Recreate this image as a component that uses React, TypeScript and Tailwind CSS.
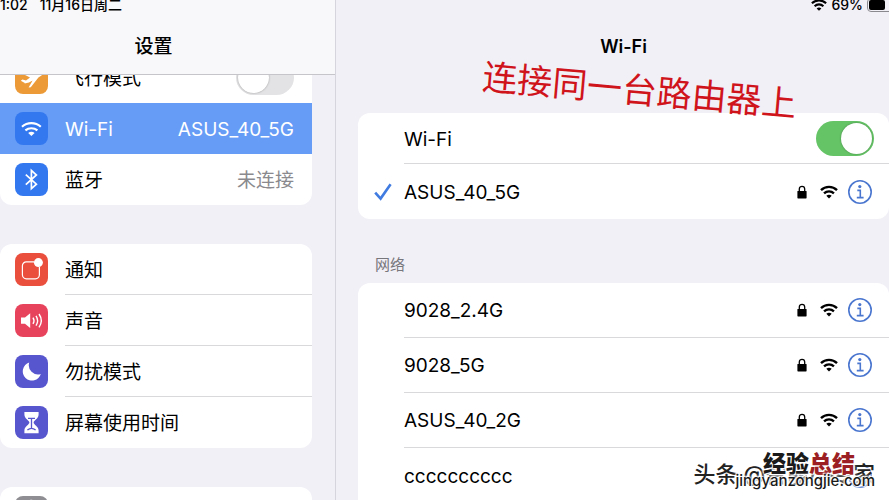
import React, { ReactNode } from 'react';
import clsx from 'clsx';

function WifiIcon({ className }: { className?: string }) {
  return (
    <svg viewBox="0 0 20 15" className={className} fill="none" stroke="currentColor" strokeWidth="2.6">
      <path d="M1.1 5.4 C6 0.5 14 0.5 18.9 5.4" />
      <path d="M4.5 9 C7.6 6 12.4 6 15.5 9" />
      <path d="M7 11.8 C8.8 10.2 11.2 10.2 13 11.8 L10 14.8 Z" fill="currentColor" stroke="none" />
    </svg>
  );
}

function LockIcon() {
  return (
    <svg viewBox="0 0 10 14" className="w-[10px] h-[14px]">
      <path d="M2.3 7 V4 C2.3 0.4 7.7 0.4 7.7 4 V7" fill="none" stroke="black" strokeWidth="1.3" />
      <rect x="0.4" y="6" width="9.2" height="7.4" rx="0.6" fill="black" />
    </svg>
  );
}

function InfoIcon() {
  return (
    <svg viewBox="0 0 24 24" className="w-6 h-6" fill="none" stroke="#4a76cf" strokeWidth="1.6">
      <circle cx="12" cy="12" r="11.2" />
      <circle cx="11.8" cy="6.6" r="1.6" fill="#4a76cf" stroke="none" />
      <path d="M9.3 10.4 H12.3 V17.4 M8.8 17.6 H15.6" />
    </svg>
  );
}

const icons = {
  airplane: (
    <path
      d="M28 11.2 C27.4 9.8 25.6 10 24.2 10.9 L20 13.4 L9.6 11.4 L7.6 12.8 L15 16.6 L11 19.4 L7.4 18.6 L5.8 19.8 L9.8 22 L9.6 22.4 L14 21.6 L17.6 19.6 L13.6 26.4 L15.8 26.2 L23.4 16.4 L26.8 14.2 C28 13.2 28.4 12.2 28 11.2 Z"
      fill="white"
    />
  ),
  wifi: (
    <g transform="translate(6.4 9.6)" fill="none" stroke="white" strokeWidth="2.2">
      <path d="M0.6 5.2 C6 0.4 14 0.4 19.4 5.2" />
      <path d="M4 8.8 C7.4 5.9 12.6 5.9 16 8.8" />
      <path d="M6.8 11.4 C8.8 9.6 11.2 9.6 13.2 11.4 L10 14.4 Z" fill="white" stroke="none" />
    </g>
  ),
  bluetooth: (
    <path d="M10.8 11.6 L21.4 21.2 L16.4 25.6 V7.4 L21.4 12 L10.8 21.6" fill="none" stroke="white" strokeWidth="1.7" />
  ),
  notice: (
    <>
      <path d="M19 8.8 H11.4 a4 4 0 0 0 -4 4 V21.8 a4 4 0 0 0 4 4 H20.4 a4 4 0 0 0 4 -4 V14" fill="none" stroke="white" strokeWidth="1.2" />
      <circle cx="23.4" cy="9.6" r="4.5" fill="white" />
    </>
  ),
  sound: (
    <>
      <path d="M6 13.6 H10 L15.2 9.2 V24 L10 19.8 H6 Z" fill="white" />
      <path d="M18 13.6 Q20 16.6 18 19.8 M21 11.8 Q24.2 16.6 21 21.6 M24 10 Q28.6 16.6 24 23.4" fill="none" stroke="white" strokeWidth="1.4" />
    </>
  ),
  moon: <path d="M14.2 7.6 A9.2 9.2 0 1 0 25.8 19 A9.2 9.2 0 0 1 14.2 7.6 Z" fill="white" />,
  hourglass: (
    <>
      <path d="M9.4 6 H23.6 V8.6 C23.6 13 18.6 14.4 18.6 16.6 C18.6 18.8 23.6 20.4 23.6 24.6 V27.2 H9.4 V24.6 C9.4 20.4 14.4 18.8 14.4 16.6 C14.4 14.4 9.4 13 9.4 8.6 Z" fill="white" />
      <path d="M13 12.4 H20 M16.5 12.4 V22.4 M12.4 24 Q16.5 20.6 20.6 24" fill="none" stroke="#5856ce" strokeWidth="1.3" />
    </>
  ),
  gear: (
    <g fill="none" stroke="white">
      <circle cx="16.5" cy="16.5" r="9.6" strokeWidth="2" />
      <circle cx="16.5" cy="16.5" r="11.8" strokeWidth="2" strokeDasharray="2 1.6" />
    </g>
  ),
};

interface SideRowProps {
  icon: keyof typeof icons;
  color: string;
  label: string;
  value?: ReactNode;
  active?: boolean;
  divider?: boolean;
}

function SideRow({ icon, color, label, value, active, divider }: SideRowProps) {
  return (
    <li className={clsx('flex items-center pl-[15px]', active && 'bg-[#669cf6] text-white')}>
      <svg viewBox="0 0 33 33" className={clsx('w-[33px] h-[33px] rounded-lg shrink-0', color)}>
        {icons[icon]}
      </svg>
      <div className={clsx('ml-[17px] flex h-[51px] flex-1 items-center justify-between pr-[18px]', divider && 'border-b border-[#d9d9dc]')}>
        <span className="pt-[3px]">{label}</span>
        {value}
      </div>
    </li>
  );
}

function Toggle({ label, on }: { label: string; on?: boolean }) {
  return (
    <label className="relative block w-[58px] h-[35px] shrink-0">
      <input type="checkbox" aria-label={label} defaultChecked={on} className="peer sr-only" />
      <span className="block h-full rounded-full bg-[#e3e3e5] peer-checked:bg-[#65c466]" />
      <span className="absolute left-[2px] top-[2px] w-[31px] h-[31px] rounded-full bg-white shadow-[0_0_2px_rgba(0,0,0,0.35)] peer-checked:left-[25px]" />
    </label>
  );
}

function NetworkRow({ name, checked, last }: { name: string; checked?: boolean; last?: boolean }) {
  return (
    <li className="flex items-center">
      <div className="w-[46px] shrink-0 pl-4">
        {checked && (
          <svg viewBox="0 0 18 18" className="w-[18px] h-[18px]" fill="none" stroke="#3f7be0" strokeWidth="2.6">
            <path d="M1.2 9.6 L6.6 15.6 L16.6 1.2" />
          </svg>
        )}
      </div>
      <div className={clsx('flex flex-1 items-center h-[55px] pr-[17px]', !last && 'border-b border-[#d9d9dc]')}>
        <span className="flex-1 pt-[2px]">{name}</span>
        <LockIcon />
        <WifiIcon className="ml-[13px] w-[18px] h-[14px]" />
        <button type="button" aria-label={`${name} info`} className="ml-[10px]">
          <InfoIcon />
        </button>
      </div>
    </li>
  );
}

export default function App() {
  return (
    <div className="relative flex h-screen overflow-hidden bg-[#f2f0f7] text-[19px] leading-6 text-black font-['Inter','Noto_Sans_CJK_SC',sans-serif]">
      <aside className="flex w-[336px] shrink-0 flex-col border-r border-[#d6d4dc]">
        <header className="relative z-10 flex h-[75px] shrink-0 flex-col border-b border-[#c6c5ca] bg-[#f8f7f9]">
          <div className="-mt-[5px] flex gap-3 text-[14px] leading-5 font-medium">
            <span>1:02</span>
            <span>11月16日周二</span>
          </div>
          <h1 className="mt-5 pr-7 text-center font-medium">设置</h1>
        </header>

        <nav className="-mt-[23px] flex flex-col gap-[39px] pr-[23px]">
          <ul className="overflow-hidden rounded-xl bg-white">
            <SideRow icon="airplane" color="bg-[#ec9a38]" label="飞行模式" value={<Toggle label="飞行模式" />} />
            <SideRow icon="wifi" color="bg-[#3478f0]" label="Wi-Fi" value={<span className="pt-[3px]">ASUS_40_5G</span>} active />
            <SideRow icon="bluetooth" color="bg-[#3478f0]" label="蓝牙" value={<span className="pt-[3px] text-[#8a8a8e]">未连接</span>} />
          </ul>
          <ul className="rounded-xl bg-white">
            <SideRow icon="notice" color="bg-[#ea4e3d]" label="通知" divider />
            <SideRow icon="sound" color="bg-[#e8435c]" label="声音" divider />
            <SideRow icon="moon" color="bg-[#5856ce]" label="勿扰模式" divider />
            <SideRow icon="hourglass" color="bg-[#5856ce]" label="屏幕使用时间" />
          </ul>
          <ul className="rounded-xl bg-white">
            <SideRow icon="gear" color="bg-[#8e8e93]" label="通用" />
          </ul>
        </nav>
      </aside>

      <main className="min-w-0 flex-1 pl-[22px]">
        <div className="-mt-[5px] flex h-5 items-center justify-end gap-1 text-[14px] leading-5 font-medium">
          <WifiIcon className="w-4 h-3" />
          <span>69%</span>
          <svg viewBox="0 0 22 14" className="w-[22px] h-[14px]">
            <rect x="0.5" y="0.5" width="30" height="13" rx="3.5" fill="none" stroke="#8a8a8e" />
            <rect x="2" y="2" width="16" height="10" rx="2" fill="black" />
          </svg>
        </div>
        <h2 className="mt-5 text-center text-[18px] font-semibold">Wi-Fi</h2>

        <ul className="mt-[54px] rounded-xl bg-white">
          <li className="pl-[46px]">
            <div className="flex h-[51px] items-center justify-between border-b border-[#d9d9dc] pr-[15px]">
              <span className="pt-[3px]">Wi-Fi</span>
              <Toggle label="Wi-Fi" on />
            </div>
          </li>
          <NetworkRow name="ASUS_40_5G" checked last />
        </ul>

        <h3 className="mt-9 mb-2 pl-[17px] text-[15px] leading-5 text-[#77767b]">网络</h3>
        <ul className="rounded-t-xl bg-white">
          <NetworkRow name="9028_2.4G" />
          <NetworkRow name="9028_5G" />
          <NetworkRow name="ASUS_40_2G" />
          <NetworkRow name="cccccccccc" last />
        </ul>
      </main>

      {/* Tilted note over the list */}
      <p className="absolute left-[482px] top-[66px] rotate-[5deg] whitespace-nowrap text-[35px] leading-[48px] text-[#d0141c]">
        连接同一台路由器上
      </p>

      {/* Watermarks */}
      <p className="absolute right-[14px] bottom-[10px] whitespace-nowrap text-[22px] leading-8 font-medium text-[#222] [text-shadow:-1px_-1px_0_white,0_0_2px_white]">
        头条 @智能小专家
      </p>
      <div className="absolute right-[14px] bottom-[14px] text-[#1a1a1a] [text-shadow:0_0_2px_white,0_0_3px_white,0_0_4px_white,1px_1px_1px_white,-1px_-1px_1px_white]">
        <p className="pr-5 text-right text-[23px] leading-6 font-black">
          经验<span className="text-[#9c1f24]">总结</span>
        </p>
        <p className="text-[15px] leading-[10px] font-medium">jingyanzongjie.com</p>
      </div>
    </div>
  );
}
